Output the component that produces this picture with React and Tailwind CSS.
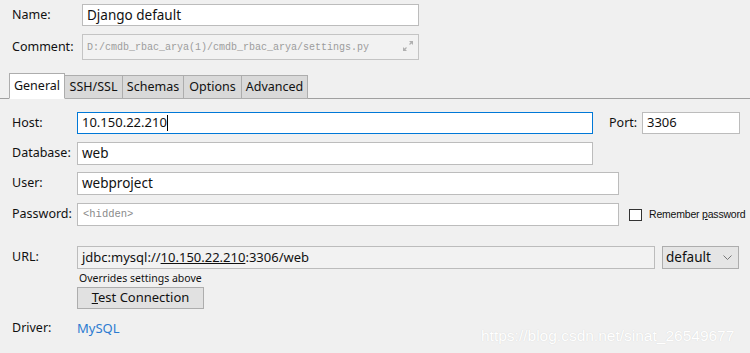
import React from "react";

const font = { fontFamily: '"Noto Sans", "Open Sans", sans-serif' };

function Tab({ label, w, active }) {
  return (
    <div
      className={`shrink-0 flex items-center justify-center border border-[#adadad] -ml-px first:ml-0 text-[12.5px] ${
        active ? "h-[26px] bg-white border-b-white z-10" : "bg-[#d9d9d9] mt-[2px] h-[24px]"
      }`}
      style={{ width: w }}
    >
      {label}
    </div>
  );
}

const mono = { fontFamily: '"Liberation Mono", "DejaVu Sans Mono", monospace' };

export default function App() {
  return (
    <div
      className="relative w-[750px] h-[353px] bg-[#f0f0f0] text-[#111] text-[12.5px] overflow-hidden whitespace-nowrap"
      style={font}
    >
      {/* top section */}
      <div className="pl-[12px] pt-[4px]">
        <div className="flex items-center">
          <div className="w-[70px] shrink-0">Name:</div>
          <div className="shrink-0 w-[337px] h-[22px] border border-[#bcbcbc] bg-white flex items-center pl-[4px] text-[13.5px]">
            Django default
          </div>
        </div>
        <div className="flex items-center mt-[8px]">
          <div className="w-[70px] shrink-0">Comment:</div>
          <div
            className="shrink-0 relative w-[337px] h-[26px] border border-[#c4c4c4] bg-[#f2f2f2] flex items-center pl-[4px] text-[#9c9c9c] text-[10px]"
            style={mono}
          >
            D:/cmdb_rbac_arya(1)/cmdb_rbac_arya/settings.py
            <svg className="absolute right-[4px] top-[5px]" width="12" height="12" viewBox="0 0 12 12">
              <path d="M7 1 L11 1 L11 5 Z" fill="#b0b0b0" />
              <path d="M1 7 L1 11 L5 11 Z" fill="#b0b0b0" />
              <path d="M10 2 L7.5 4.5 M2 10 L4.5 7.5" stroke="#b0b0b0" strokeWidth="1.2" />
            </svg>
          </div>
        </div>
      </div>

      {/* tabs */}
      <div className="mt-[13px] border-b border-[#a0a0a0]">
        <div className="flex items-start pl-[9px] -mb-px">
          <Tab label="General" w={56} active />
          <Tab label="SSH/SSL" w={59} />
          <Tab label="Schemas" w={62} />
          <Tab label="Options" w={59} />
          <Tab label="Advanced" w={67} />
        </div>
      </div>

      {/* form */}
      <div className="pl-[12px] pt-[13px]">
        <div className="flex items-center">
          <div className="w-[65px] shrink-0">Host:</div>
          <div className="shrink-0 w-[516px] h-[22px] border border-[#0078d7] bg-white flex items-center pl-[4px] text-[13px]">
            10.150.22.210<span className="inline-block w-px h-[16px] bg-black" />
          </div>
          <div className="w-[33px] ml-[16px] shrink-0">Port:</div>
          <div className="shrink-0 w-[98px] h-[22px] border border-[#bcbcbc] bg-white flex items-center pl-[4px] text-[13px]">
            3306
          </div>
        </div>
        <div className="flex items-center mt-[8px]">
          <div className="w-[65px] shrink-0">Database:</div>
          <div className="shrink-0 w-[516px] h-[23px] border border-[#bcbcbc] bg-white flex items-center pl-[4px] text-[13.5px]">
            web
          </div>
        </div>
        <div className="flex items-center mt-[7px]">
          <div className="w-[65px] shrink-0">User:</div>
          <div className="shrink-0 w-[542px] h-[23px] border border-[#bcbcbc] bg-white flex items-center pl-[4px] text-[13.5px]">
            webproject
          </div>
        </div>
        <div className="flex items-center mt-[8px]">
          <div className="w-[65px] shrink-0">Password:</div>
          <div
            className="shrink-0 w-[542px] h-[23px] border border-[#bcbcbc] bg-white flex items-center pl-[5px] text-[10.5px] text-[#8a8a8a]"
            style={mono}
          >
            &lt;hidden&gt;
          </div>
          <div className="shrink-0 ml-[10px] w-[13px] h-[12px] border border-[#333] bg-white" />
          <div
            className="ml-[7px] text-[10.5px] tracking-[-0.2px]"
            style={{ fontFamily: '"Liberation Sans", Arial, sans-serif' }}
          >
            Remember <span className="underline">p</span>assword
          </div>
        </div>
        <div className="flex items-center mt-[20px]">
          <div className="w-[65px] shrink-0">URL:</div>
          <div className="shrink-0 w-[578px] h-[23px] border border-[#bcbcbc] bg-[#f2f2f2] flex items-center pl-[4px] text-[13px]">
            jdbc:mysql://<span className="underline">10.150.22.210</span>:3306/web
          </div>
          <div className="shrink-0 ml-[7px] w-[77px] h-[23px] border border-[#adadad] bg-[#e5e5e5] flex items-center pl-[3px] text-[13.5px] relative">
            default
            <svg className="absolute right-[6px] top-[8px]" width="9" height="6" viewBox="0 0 9 6">
              <path d="M0.5 0.5 L4.5 4.5 L8.5 0.5" stroke="#777" strokeWidth="1" fill="none" />
            </svg>
          </div>
        </div>
        <div className="ml-[67px] mt-[2px] text-[10.5px] leading-[14px]">Overrides settings above</div>
        <div className="ml-[65px] mt-[2px] w-[127px] h-[22px] border border-[#adadad] bg-[#e1e1e1] flex items-center justify-center text-[13px]">
          <span>
            <span className="underline">T</span>est Connection
          </span>
        </div>
        <div className="flex items-center mt-[10px]">
          <div className="w-[65px] shrink-0">Driver:</div>
          <div className="text-[#2b7bd0] text-[13px]">MySQL</div>
        </div>
      </div>

      {/* watermark */}
      <div
        className="absolute left-[481px] top-[324px] text-[15.5px] text-white"
        style={{ fontFamily: '"Liberation Sans", Arial, sans-serif', textShadow: "0 0 1px #cfcfcf" }}
      >
        https://blog.csdn.net/sinat_26549677
      </div>
    </div>
  );
}
